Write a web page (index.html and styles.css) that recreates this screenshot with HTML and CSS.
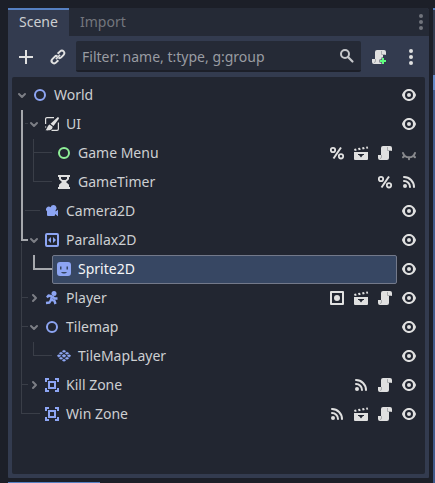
FILE: index.html
```
<!DOCTYPE html>
<html lang="en">
<head>
<meta charset="utf-8">
<title>Scene</title>
<link rel="stylesheet" href="styles.css">
</head>
<body>
<svg class="defs" aria-hidden="true">
  <symbol id="eye" viewBox="0 0 16 16"><path fill-rule="evenodd" d="M8 2C5.443 2 2.209 3.948 1.045 7.705a1 1 0 0 0 0 .57C2.163 12.022 5.376 14 8 14s5.837-1.978 6.961-5.725a1 1 0 0 0 0-.55C13.861 3.935 10.557 2 8 2zm0 2a4 4 0 0 1 0 8 4 4 0 0 1 0-8zm0 2a2 2 0 0 0 0 4 2 2 0 0 0 0-4z"/></symbol>
  <symbol id="closed" viewBox="0 0 16 16"><path d="M2 8c1 3 3.500 4.300 6 4.300S13 11 14 8M3.600 10.500 2 12.200M12.400 10.500 14 12.200M8 12.500V14.200" fill="none" stroke="currentColor" stroke-width="2" stroke-linecap="round"/></symbol>
  <symbol id="script" viewBox="0 0 16 16"><path d="M6 1a2 2 0 0 0-2 2v7H1v3a2 2 0 0 0 2 2h7a2 2 0 0 0 2-2V6h3V3a2 2 0 0 0-2-2z"/><path d="M4.500 10v2a1.500 1.500 0 0 1-1.500 1.500M10.500 2v3.500h4" fill="none" stroke="#a9abad" stroke-width="1"/></symbol>
  <symbol id="clap" viewBox="0 0 16 16"><path fill-rule="evenodd" d="M1 7h14v7a1 1 0 0 1-1 1H2a1 1 0 0 1-1-1zm4 2v1h1l2 2.500 2-2.500h1V9z"/><path d="m1 3.900 2-.3.700 2-2 .4zM5 3.100l2-.3.700 2-2 .4zM9 2.400l2-.3.700 2-2 .4zM13 1.700l1.700-.3.500 2-1.700.3z"/></symbol>
  <symbol id="percent" viewBox="0 0 16 16"><path d="M12 2.500 4.500 13.500" fill="none" stroke="currentColor" stroke-width="2"/><g fill="none" stroke="currentColor" stroke-width="1.800"><circle cx="4" cy="5" r="2.200"/><circle cx="12" cy="11.300" r="2.200"/></g></symbol>
  <symbol id="signal" viewBox="0 0 16 16"><circle cx="4" cy="12" r="2"/><path d="M3 7a6 6 0 0 1 6 6M3 3a10 10 0 0 1 10 10" fill="none" stroke="currentColor" stroke-width="2" stroke-linecap="round"/></symbol>
  <symbol id="group" viewBox="0 0 16 16"><path fill-rule="evenodd" d="M2 1h12a1 1 0 0 1 1 1v12a1 1 0 0 1-1 1H2a1 1 0 0 1-1-1V2a1 1 0 0 1 1-1zm1 2v10h10V3z"/><circle cx="8" cy="8" r="3"/></symbol>
  <symbol id="node" viewBox="0 0 16 16"><circle cx="8" cy="8" r="5" fill="none" stroke="currentColor" stroke-width="2"/></symbol>
  <symbol id="canvas" viewBox="0 0 16 16"><path d="M1.600 8V3A1.400 1.400 0 0 1 3 1.600h7M14.400 6.500V13a1.400 1.400 0 0 1-1.400 1.400H7.500M1.600 10.500v1" fill="none" stroke="currentColor" stroke-width="1.200"/><path d="M13.900 1c.8.400 1.200 1 1 1.700L9.500 10 6.500 7.700zM5.600 8.500l3 2.300c.2 2.900-3.300 4.100-7.100 3.500 1.700-1 1.700-4.800 4.100-5.800z"/></symbol>
  <symbol id="timer" viewBox="0 0 16 16"><path fill-rule="evenodd" d="M2 1h12v2h-1v2.300L10 8l3 2.700V13h1v2H2v-2h1v-2.300L6 8 3 5.300V3H2zm3 2v1.700L6.500 6h3L11 4.700V3z"/></symbol>
  <symbol id="camera" viewBox="0 0 16 16"><path d="M9.500 1a3 3 0 0 0-2.900 2.300A2.600 2.600 0 1 0 3 7.300V11a1 1 0 0 0 1 1h6a1 1 0 0 0 1-1v-1l3 2.200V5.800L11.600 7.500V6.200A3 3 0 0 0 9.500 1z" transform="translate(0 1)"/></symbol>
  <symbol id="parallax" viewBox="0 0 16 16"><path fill-rule="evenodd" d="M3 1h10a2 2 0 0 1 2 2v10a2 2 0 0 1-2 2H3a2 2 0 0 1-2-2V3a2 2 0 0 1 2-2zm0 2v10h10V3z"/><path d="M7 5v6L4 8zM9 5v6l3-3z"/></symbol>
  <symbol id="sprite" viewBox="0 0 16 16"><path fill-rule="evenodd" d="M4 1h8a3 3 0 0 1 3 3v8a3 3 0 0 1-3 3H4a3 3 0 0 1-3-3V4a3 3 0 0 1 3-3zM4 5.500v3h1.500v-3zm6.500 0v3H12v-3zM5 11c1.500 2 4.500 2 6 0z"/></symbol>
  <symbol id="runner" viewBox="0 0 16 16"><circle cx="10" cy="3.500" r="2.500"/><path d="M8.500 6 7 9.500l3.500 1.500 1 3M7.300 9.500 5.500 12.500 2 13M8 6.500 4.500 5.500 3 7.500M8.500 6.500 10.500 8.500h3" fill="none" stroke="currentColor" stroke-width="2.400" stroke-linejoin="round"/></symbol>
  <symbol id="tiles" viewBox="0 0 16 16"><path d="m8 2 2 1.300-2 1.300-2-1.300zM5 4l2 1.300-2 1.300-2-1.300zM11 4l2 1.300-2 1.300-2-1.300zM8 6.200 10.200 7.800 8 9.400 5.800 7.800zM2.800 6.400 5 7.800 2.800 9.200 1 7.800zM13.200 6.400 15 7.800 13.200 9.200 11 7.800zM5 9l2 1.300-2 1.300-2-1.300zM11 9l2 1.300-2 1.300-2-1.300zM8 11l2 1.300-2 1.300-2-1.300z" stroke="currentColor" stroke-width=".3"/></symbol>
  <symbol id="area" viewBox="0 0 16 16"><path fill-rule="evenodd" d="M1 1h4v2H3v2H1zM11 1h4v4h-2V3h-2zM1 11h2v2h2v2H1zM13 11h2v4h-4v-2h2zM4 4h8v8H4zm2 2v4h4V6z"/></symbol>
  <symbol id="down" viewBox="0 0 16 16"><path d="m5 7 3 3 3-3" fill="none" stroke="currentColor" stroke-width="2" stroke-linecap="round" stroke-linejoin="round"/></symbol>
  <symbol id="right" viewBox="0 0 16 16"><path d="m7 5 3 3-3 3" fill="none" stroke="currentColor" stroke-width="2" stroke-linecap="round" stroke-linejoin="round"/></symbol>
  <symbol id="dots" viewBox="0 0 16 16"><circle cx="8" cy="2" r="2"/><circle cx="8" cy="8" r="2"/><circle cx="8" cy="14" r="2"/></symbol>
</svg>

<div class="workspace">
  <main class="dock">
    <nav class="tabs">
      <div class="tab active">Scene</div>
      <div class="tab">Import</div>
      <svg class="icon tab-menu"><use href="#dots"/></svg>
    </nav>
    <div class="toolbar">
      <svg class="icon" viewBox="0 0 16 16"><path d="M7 1h2v6h6v2H9v6H7V9H1V7h6z"/></svg>
      <svg class="icon link" viewBox="0 0 16 16"><g transform="rotate(-45 8 8)" fill="none" stroke="currentColor" stroke-width="2"><path d="M6 10.500H2.500a2.500 2.500 0 0 1 0-5H6A2.500 2.500 0 0 1 8.300 7M10 5.500h3.500a2.500 2.500 0 0 1 0 5H10A2.500 2.500 0 0 1 7.700 9"/><path d="M5 8h6" stroke-width="1.500"/></g></svg>
      <div class="filter">
        <span>Filter: name, t:type, g:group</span>
        <svg class="icon" viewBox="0 0 16 16"><circle cx="6" cy="6" r="4" fill="none" stroke="currentColor" stroke-width="2"/><path d="m9 9 4.500 4.500" stroke="currentColor" stroke-width="2.200" stroke-linecap="round"/></svg>
      </div>
      <svg class="icon attach" viewBox="0 0 16 16"><use href="#script"/><path d="M10.500 8.500h3v2h2v3h-2v2h-3v-2h-2v-3h2z" fill="#333b4f"/><path d="M11 9h2v2h2v2h-2v2h-2v-2H9v-2h2z" fill="#5fff7f"/></svg>
      <svg class="icon more"><use href="#dots"/></svg>
    </div>
    <section class="tree">
      <svg class="lines" viewBox="12 81 60 348">
        <path class="thin" d="M25 123.500h3M33.500 139v43M34 152.500h18M34 181.500h18M25 210.500h15M21.500 243v171M22 297.500h6M22 326.500h6M22 384.500h6M22 413.500h18M33.500 342v14M34 355.500h18"/>
        <path class="thick" d="M22 110v130h6M34 255v14h18"/>
      </svg>
      <div class="row"><svg class="arrow"><use href="#down"/></svg><svg class="icon blue"><use href="#node"/></svg><span class="name">World</span><svg class="icon"><use href="#eye"/></svg></div>
      <div class="row l1"><svg class="arrow"><use href="#down"/></svg><svg class="icon"><use href="#canvas"/></svg><span class="name">UI</span><svg class="icon"><use href="#eye"/></svg></div>
      <div class="row l2"><i class="arrow"></i><svg class="icon green"><use href="#node"/></svg><span class="name">Game Menu</span><svg class="icon"><use href="#percent"/></svg><svg class="icon"><use href="#clap"/></svg><svg class="icon"><use href="#script"/></svg><svg class="icon dim"><use href="#closed"/></svg></div>
      <div class="row l2"><i class="arrow"></i><svg class="icon"><use href="#timer"/></svg><span class="name">GameTimer</span><svg class="icon"><use href="#percent"/></svg><svg class="icon"><use href="#signal"/></svg></div>
      <div class="row l1"><i class="arrow"></i><svg class="icon blue"><use href="#camera"/></svg><span class="name">Camera2D</span><svg class="icon"><use href="#eye"/></svg></div>
      <div class="row l1"><svg class="arrow"><use href="#down"/></svg><svg class="icon blue"><use href="#parallax"/></svg><span class="name">Parallax2D</span><svg class="icon"><use href="#eye"/></svg></div>
      <div class="row picked"><div class="selection"><svg class="icon blue"><use href="#sprite"/></svg><span class="name">Sprite2D</span></div><svg class="icon"><use href="#eye"/></svg></div>
      <div class="row l1"><svg class="arrow"><use href="#right"/></svg><svg class="icon blue"><use href="#runner"/></svg><span class="name">Player</span><svg class="icon"><use href="#group"/></svg><svg class="icon"><use href="#clap"/></svg><svg class="icon"><use href="#script"/></svg><svg class="icon"><use href="#eye"/></svg></div>
      <div class="row l1"><svg class="arrow"><use href="#down"/></svg><svg class="icon blue"><use href="#node"/></svg><span class="name">Tilemap</span><svg class="icon"><use href="#eye"/></svg></div>
      <div class="row l2"><i class="arrow"></i><svg class="icon blue"><use href="#tiles"/></svg><span class="name">TileMapLayer</span><svg class="icon"><use href="#eye"/></svg></div>
      <div class="row l1"><svg class="arrow"><use href="#right"/></svg><svg class="icon blue"><use href="#area"/></svg><span class="name">Kill Zone</span><svg class="icon"><use href="#signal"/></svg><svg class="icon"><use href="#script"/></svg><svg class="icon"><use href="#eye"/></svg></div>
      <div class="row l1"><i class="arrow"></i><svg class="icon blue"><use href="#area"/></svg><span class="name">Win Zone</span><svg class="icon"><use href="#signal"/></svg><svg class="icon"><use href="#clap"/></svg><svg class="icon"><use href="#script"/></svg><svg class="icon"><use href="#eye"/></svg></div>
    </section>
  </main>
  <aside class="viewport"></aside>
</div>
<div class="next-dock"></div>
</body>
</html>
```
FILE: styles.css
```
* { box-sizing: border-box; }
body {
  margin: 0;
  width: 435px;
  height: 483px;
  overflow: hidden;
  background: #1c1f28;
  color: #cdcfd2;
  font: 14px/20px "Noto Sans", sans-serif;
}
.defs { display: none; }
.workspace { display: flex; gap: 4px; padding: 8px 0 0 8px; height: 478px; }
.dock {
  width: 421px;
  flex: none;
  display: flex;
  flex-direction: column;
  background: #333b4f;
  border-radius: 0 3px 1px 1px;
  overflow: hidden;
}
.viewport {
  width: 2px;
  height: 475px;
  border-top: 2px solid #5680c2;
  background: linear-gradient(#333b4f 65px, #6287c6 65px 80px, #40598a 80px);
}
.tabs { display: flex; height: 28px; background: #252a36; }
.tab { padding: 4px 11px; color: #73767d; }
.tab.active {
  width: 61px;
  padding: 2px 11px;
  border-top: 2px solid #5680c2;
  background: #333b4f;
  color: #cdcfd2;
}
.icon { width: 16px; height: 16px; flex: none; fill: currentColor; color: #e0e0e0; overflow: visible; }
.tab-menu { margin: 6px 0 0 auto; color: #71747c; }
.toolbar { display: flex; align-items: center; height: 41px; padding: 1px 10px; }
.link { margin-left: 16px; }
.filter {
  display: flex;
  align-items: center;
  justify-content: space-between;
  width: 285px;
  height: 31px;
  margin-left: 10px;
  padding: 0 6px;
  border-radius: 2px;
  border-bottom: 2px solid #1c1f29;
  background: #252a36;
  color: #999ca2;
}
.filter span { padding-top: 2px; }
.filter .icon { color: #c6c8cb; }
.attach { margin-left: 10px; }
.more { margin-left: 16px; }
.tree {
  position: relative;
  width: 413px;
  height: 397px;
  margin-left: 4px;
  padding-top: 4px;
  border-radius: 2px;
  background: #222631;
}
.lines { position: absolute; left: 0; top: 4px; width: 60px; height: 348px; fill: none; }
.thin { stroke: #3a3e48; }
.thick { stroke: #a6a8ad; stroke-width: 2; }
.row { position: relative; display: flex; align-items: center; gap: 8px; height: 29px; padding: 0 8px 1px 2px; }
.l1 { padding-left: 14px; }
.l2 { padding-left: 26px; }
.arrow { width: 16px; height: 16px; flex: none; color: #7c7e85; margin-right: -6px; }
.name { flex: 1; margin-left: -2px; white-space: nowrap; }
.blue { color: #8da5f3; }
.green { color: #8eef97; }
.dim { color: #88898d; }
.picked { gap: 4px; padding: 0 8px 0 40px; }
.picked > .icon { margin-top: -1px; }
.selection {
  display: flex;
  align-items: center;
  gap: 8px;
  flex: 1;
  height: 29px;
  padding: 0 3px 1px;
  border: 1px solid #73798a;
  border-radius: 2px;
  background: #374763;
  color: #f4f5f7;
}
.next-dock { width: 92px; height: 2px; margin: 4px 0 0 8px; background: #5680c2; }
```
